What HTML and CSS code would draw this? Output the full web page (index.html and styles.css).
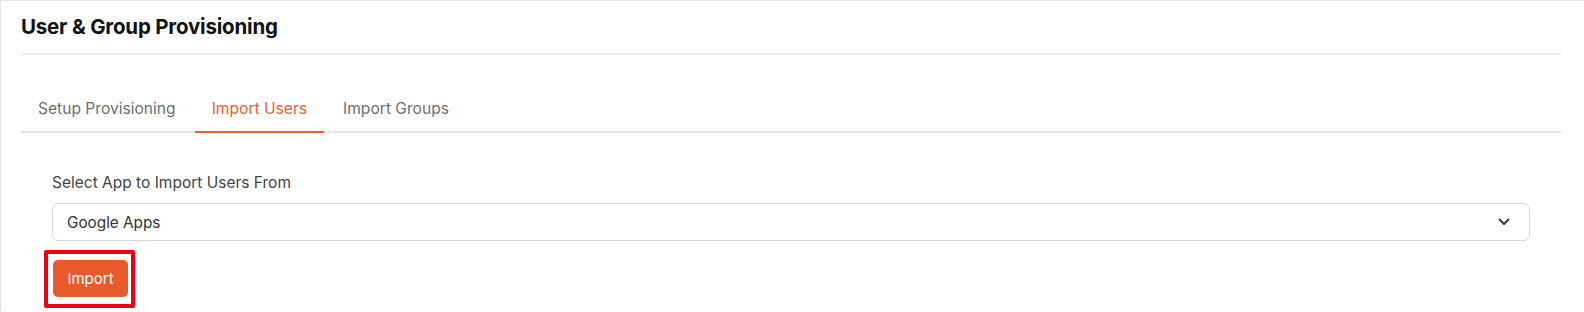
FILE: index.html
```html
<!DOCTYPE html>
<html lang="en">
<head>
    <meta charset="UTF-8">
    <meta name="viewport" content="width=device-width, initial-scale=1.0">
    <title>User &amp; Group Provisioning</title>
    <link rel="stylesheet" href="styles.css">
</head>
<body>
    <div id="card">
        <div class="card-header">
            <h2>User &amp; Group Provisioning</h2>
        </div>
        <ul class="tabs">
            <li class="tab">Setup Provisioning</li>
            <li class="tab active">Import Users</li>
            <li class="tab">Import Groups</li>
        </ul>
        <div class="tab-content">
            <label class="field-label" for="app-selector">Select App to Import Users From</label>
            <div class="select-box">
                <span id="app-selector">Google Apps</span>
                <svg class="chevron" width="12" height="8" viewBox="0 0 12 8">
                    <path d="M1.5 1.5 L6 6 L10.5 1.5" fill="none" stroke="#333" stroke-width="1.8" stroke-linecap="round" stroke-linejoin="round"/>
                </svg>
            </div>
            <span class="highlight">
                <button class="btn-import">Import</button>
            </span>
        </div>
    </div>
</body>
</html>
```

FILE: styles.css
```css
body {
    font-family: Inter, "Noto Sans", sans-serif;
    background: #ffffff;
    color: #222;
    margin: 0;
}
#card {
    border-top: 1px solid #e3e3e3;
    border-left: 1px solid #e3e3e3;
    padding: 0 23px 0 20px;
    height: 311px;
    box-sizing: border-box;
}
.card-header {
    border-bottom: 2px solid #ececec;
    height: 52px;
    display: flex;
    align-items: center;
}
.card-header h2 {
    margin: 0;
    font-size: 20.5px;
    font-weight: 700;
    color: #111;
    letter-spacing: -0.2px;
    position: relative;
    top: -1px;
}
.tabs {
    list-style: none;
    margin: 32px 0 0;
    padding: 0;
    display: flex;
    border-bottom: 2px solid #e4e4e4;
}
.tab {
    padding: 12px 17px 13px;
    font-size: 15.6px;
    color: #6e6e6e;
    margin-bottom: -2px;
    border-bottom: 2px solid transparent;
    margin-right: 2px;
}
.tab.active {
    color: #e8612f;
    border-bottom-color: #e8612f;
}
.tab-content {
    padding: 40px 31px 0;
}
.field-label {
    display: block;
    font-size: 15.5px;
    color: #444;
    margin-bottom: 11px;
}
.select-box {
    display: flex;
    align-items: center;
    justify-content: space-between;
    height: 38px;
    box-sizing: border-box;
    border: 1px solid #d6d6d6;
    border-radius: 6px;
    padding: 0 19px 0 14px;
    font-size: 15.3px;
    color: #333;
}
.highlight {
    display: inline-block;
    margin: 9px 0 0 -8px;
    border: 4px solid #f0000f;
    border-radius: 2px;
    padding: 6px 3px 7px 5px;
}
.btn-import {
    display: block;
    width: 75px;
    height: 37px;
    border: none;
    border-radius: 5px;
    background: #e95a2a;
    color: #ffffff;
    font-family: inherit;
    font-size: 15px;
    cursor: pointer;
}
```
